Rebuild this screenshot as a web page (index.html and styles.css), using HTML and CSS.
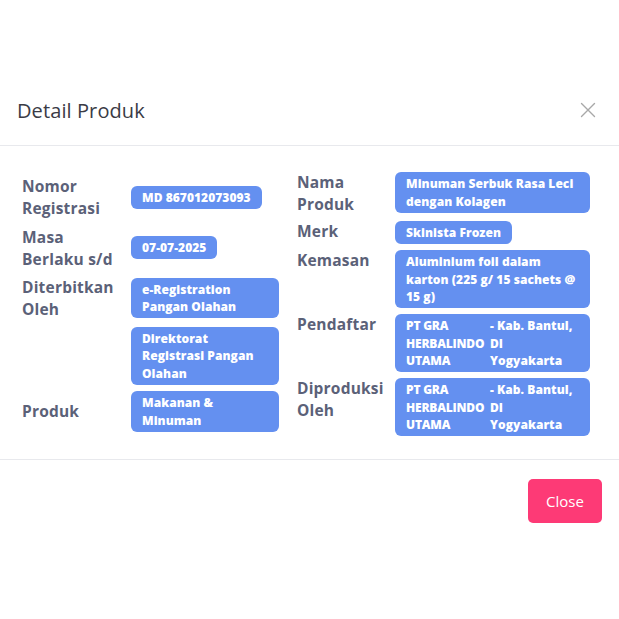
FILE: index.html
```html
<!DOCTYPE html>
<html>
<head>
<meta charset="utf-8">
<link rel="stylesheet" href="styles.css">
</head>
<body>
<div class="modal">
  <div class="modal-header">
    <h5 class="modal-title">Detail Produk</h5>
    <button class="btn-x" aria-label="Close">
      <svg width="16" height="16" viewBox="0 0 16 16"><path d="M1.5 1.5L14.5 14.5M14.5 1.5L1.5 14.5" stroke="#a8a8a8" stroke-width="1.4" fill="none" stroke-linecap="round"/></svg>
    </button>
  </div>
  <div class="modal-body">
    <div class="col col-left">
      <div class="label">Nomor Registrasi</div>
      <div class="value"><span class="badge">MD 867012073093</span></div>
      <div class="label">Masa Berlaku s/d</div>
      <div class="value"><span class="badge">07-07-2025</span></div>
      <div class="label">Diterbitkan Oleh</div>
      <div class="value"><span class="badge">e-Registration Pangan Olahan</span></div>
      <div class="label"></div>
      <div class="value"><span class="badge">Direktorat Registrasi Pangan Olahan</span></div>
      <div class="label">Produk</div>
      <div class="value"><span class="badge">Makanan &amp; Minuman</span></div>
    </div>
    <div class="col col-right">
      <div class="label">Nama Produk</div>
      <div class="value"><span class="badge">Minuman Serbuk Rasa Leci dengan Kolagen</span></div>
      <div class="label">Merk</div>
      <div class="value"><span class="badge">Skinista Frozen</span></div>
      <div class="label">Kemasan</div>
      <div class="value"><span class="badge">Aluminium foil dalam karton (225 g/ 15 sachets @ 15 g)</span></div>
      <div class="label">Pendaftar</div>
      <div class="value"><span class="badge badge-split"><span class="part-a">PT GRA HERBALINDO UTAMA</span><span class="part-b">- Kab. Bantul,<br>DI<br>Yogyakarta</span></span></div>
      <div class="label">Diproduksi Oleh</div>
      <div class="value"><span class="badge badge-split"><span class="part-a">PT GRA HERBALINDO UTAMA</span><span class="part-b">- Kab. Bantul,<br>DI<br>Yogyakarta</span></span></div>
    </div>
  </div>
  <div class="modal-footer">
    <button class="btn-close">Close</button>
  </div>
</div>
</body>
</html>
```
FILE: styles.css
```css
* { box-sizing: border-box; }
html, body { margin: 0; padding: 0; background: #fff; }
body { font-family: "Open Sans", "DejaVu Sans", sans-serif; }

.modal { margin-top: 75px; width: 619px; }

.modal-header {
  height: 71px;
  display: flex;
  align-items: center;
  justify-content: space-between;
  padding: 0 23px 0 17px;
  border-bottom: 1px solid #e8e9ed;
}
.modal-title {
  margin: 0;
  font-size: 20px;
  font-weight: 400;
  color: #3a3b45;
  letter-spacing: 0.1px;
}
.btn-x {
  border: 0;
  background: none;
  padding: 0;
  width: 16px;
  height: 16px;
  display: flex;
}

.modal-body {
  display: flex;
  gap: 18px;
  padding: 26px 29px 23px 22px;
  border-bottom: 1px solid #e8e9ed;
}
.col {
  display: grid;
}
.col-left {
  grid-template-columns: 109px 148px;
  row-gap: 6.5px;
  align-items: center;
  align-content: start;
  padding-top: 3px;
}
.col-right {
  grid-template-columns: 98px 195px;
  row-gap: 6px;
  align-items: start;
  align-content: start;
}
.label {
  font-size: 15.5px;
  line-height: 22px;
  font-weight: 700;
  color: #5b6178;
  letter-spacing: 0.2px;
}
.col-left .label { padding-right: 6px; }
.col-right .label { margin-top: -1px; }
.value { display: flex; }
.badge {
  display: inline-block;
  background: #6490f0;
  color: #fff;
  font-size: 12px;
  font-weight: 800;
  line-height: 17.5px;
  padding: 3px 11px 2.5px;
  border-radius: 6px;
  letter-spacing: 0.05px;
}
.badge-split { display: flex; width: 100%; }
.part-a { width: 84px; flex: none; letter-spacing: -0.2px; }
.part-b { flex: 1; }

.modal-footer {
  display: flex;
  justify-content: flex-end;
  padding: 19px 17px;
}
.btn-close {
  width: 74px;
  height: 44px;
  border: 0;
  border-radius: 5px;
  background: #fd3a76;
  color: #fff;
  font-family: "Open Sans", sans-serif;
  font-size: 15px;
  font-weight: 400;
}
```
